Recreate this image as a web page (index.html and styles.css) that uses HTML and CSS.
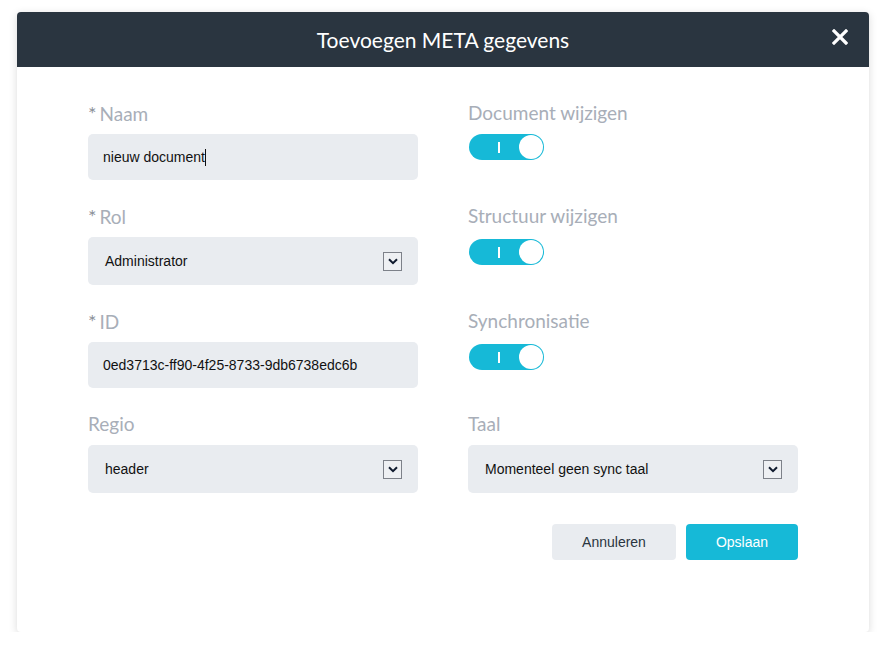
FILE: index.html
```html
<!DOCTYPE html>
<html>
<head>
  <title>Toevoegen META gegevens</title>
  <meta name="viewport" content="width=device-width, initial-scale=1.0">
  <link rel="stylesheet" href="styles.css">
</head>
<body>
  <div class="modal">
    <div class="modal-header">
      <h1>Toevoegen META gegevens</h1>
      <span class="close">
        <svg width="16" height="16" viewBox="0 0 16 16"><path d="M2 2 L14 14 M14 2 L2 14" stroke="#fff" stroke-width="3.2" stroke-linecap="square"/></svg>
      </span>
    </div>

    <div class="modal-body">
      <div class="form-grid">
        <div class="field">
          <label class="label"><span class="req">*</span>Naam</label>
          <div class="input">nieuw document<span class="caret"></span></div>
        </div>
        <div class="field">
          <label class="label">Document wijzigen</label>
          <div class="toggle"><span class="bar"></span><span class="knob"></span></div>
        </div>

        <div class="field">
          <label class="label"><span class="req">*</span>Rol</label>
          <div class="select">Administrator<span class="arrow"><svg width="10" height="7" viewBox="0 0 10 7"><path d="M1 1.2 L5 5.2 L9 1.2" fill="none" stroke="#0f1a2e" stroke-width="2"/></svg></span></div>
        </div>
        <div class="field">
          <label class="label">Structuur wijzigen</label>
          <div class="toggle low"><span class="bar"></span><span class="knob"></span></div>
        </div>

        <div class="field">
          <label class="label"><span class="req">*</span>ID</label>
          <div class="input">0ed3713c-ff90-4f25-8733-9db6738edc6b</div>
        </div>
        <div class="field">
          <label class="label">Synchronisatie</label>
          <div class="toggle low"><span class="bar"></span><span class="knob"></span></div>
        </div>

        <div class="field">
          <label class="label">Regio</label>
          <div class="select">header<span class="arrow"><svg width="10" height="7" viewBox="0 0 10 7"><path d="M1 1.2 L5 5.2 L9 1.2" fill="none" stroke="#0f1a2e" stroke-width="2"/></svg></span></div>
        </div>
        <div class="field">
          <label class="label">Taal</label>
          <div class="select">Momenteel geen sync taal<span class="arrow"><svg width="10" height="7" viewBox="0 0 10 7"><path d="M1 1.2 L5 5.2 L9 1.2" fill="none" stroke="#0f1a2e" stroke-width="2"/></svg></span></div>
        </div>
      </div>

      <div class="actions">
        <button class="btn btn-cancel">Annuleren</button>
        <button class="btn btn-save">Opslaan</button>
      </div>
    </div>
  </div>
</body>
</html>
```

FILE: styles.css
```css
body {
  margin: 0;
  padding: 12px 0 0 17px;
  background: #ffffff;
  font-family: Lato, "Open Sans", sans-serif;
}

.modal {
  width: 852px;
  background: #ffffff;
  border-radius: 4px;
  box-shadow: 0 2px 8px rgba(0, 0, 0, 0.15);
}

.modal-header {
  position: relative;
  height: 55px;
  background: #2a3540;
  border-radius: 4px 4px 0 0;
  display: flex;
  align-items: center;
  justify-content: center;
}

.modal-header h1 {
  margin: 0;
  font-size: 21px;
  font-weight: 400;
  color: #ffffff;
}

.close {
  position: absolute;
  right: 21px;
  top: 17px;
  width: 16px;
  height: 16px;
  display: flex;
}

.modal-body {
  padding: 34px 71px 72px 71px;
}

.form-grid {
  display: grid;
  grid-template-columns: 330px 330px;
  column-gap: 50px;
  row-gap: 24px;
}

.field {
  display: flex;
  flex-direction: column;
}

.label {
  height: 24px;
  line-height: 24px;
  margin-bottom: 9px;
  font-size: 19px;
  color: #a8aeb8;
}

.req {
  font-size: 20px;
  margin-right: 3px;
  color: #8b919a;
}

.input,
.select {
  background: #e9ecf0;
  border-radius: 5px;
  font-family: "Liberation Sans", Arial, sans-serif;
  font-size: 14px;
  color: #111111;
  display: flex;
  align-items: center;
}

.input {
  height: 46px;
  padding-left: 15px;
}

.select {
  height: 48px;
  padding-left: 17px;
  padding-right: 16px;
  justify-content: space-between;
}

.caret {
  display: inline-block;
  width: 1px;
  height: 17px;
  background: #111111;
}

.arrow {
  width: 17px;
  height: 17px;
  border: 1px solid #7d8189;
  background: #eef0f3;
  display: flex;
  align-items: center;
  justify-content: center;
}

.toggle {
  position: relative;
  width: 75px;
  height: 26px;
  margin-left: 1px;
  border-radius: 13px;
  background: #16b9d7;
}

.toggle.low {
  margin-top: 2px;
}

.toggle .bar {
  position: absolute;
  left: 29px;
  top: 8px;
  width: 2px;
  height: 11px;
  background: #ffffff;
}

.toggle .knob {
  position: absolute;
  right: 1px;
  top: 1px;
  width: 24px;
  height: 24px;
  border-radius: 50%;
  background: #ffffff;
}

.actions {
  display: flex;
  justify-content: flex-end;
  gap: 10px;
  margin-top: 31px;
}

.btn {
  height: 36px;
  border: none;
  border-radius: 4px;
  font-family: "Liberation Sans", Arial, sans-serif;
  font-size: 14px;
  cursor: pointer;
}

.btn-cancel {
  width: 124px;
  background: #e9ecf0;
  color: #2a3540;
}

.btn-save {
  width: 112px;
  background: #16b9d7;
  color: #ffffff;
}
```
